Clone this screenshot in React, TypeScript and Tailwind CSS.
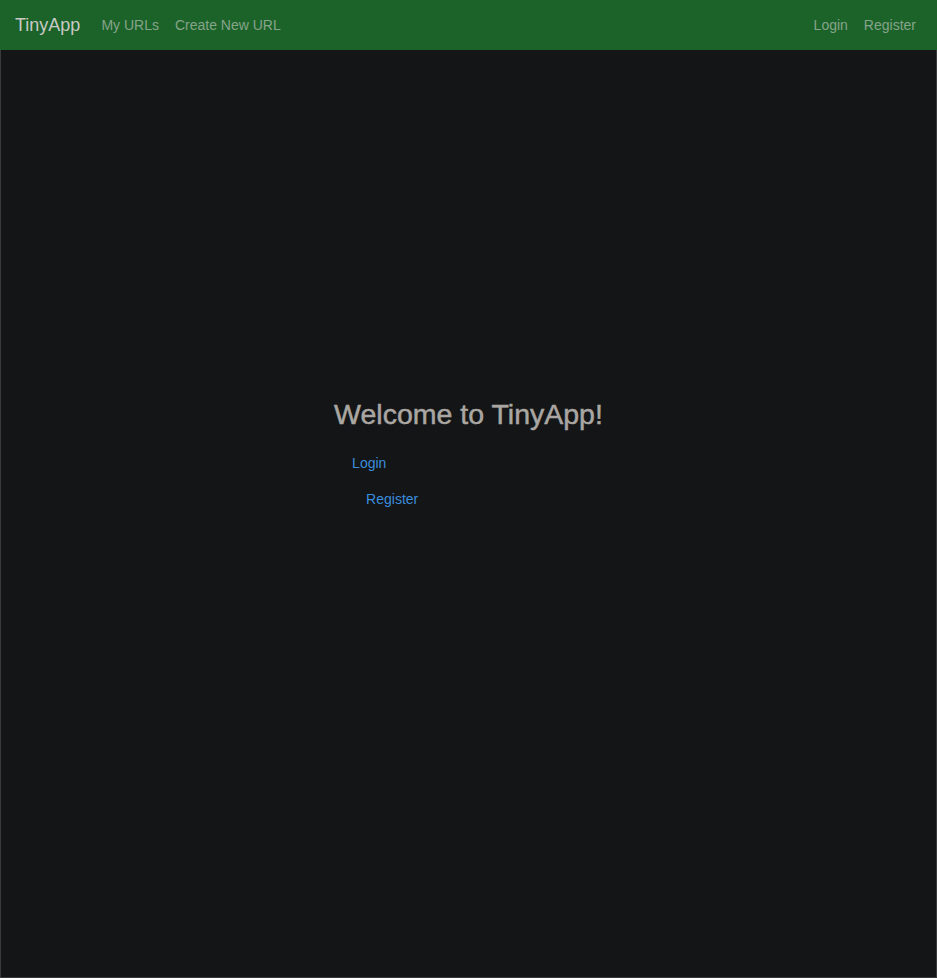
export default function App() {
  return (
    <div
      className="flex h-[978px] w-[937px] flex-col border border-t-0 border-[#3a3b3d] bg-[#141517]"
      style={{ fontFamily: '"Liberation Sans", Arial, sans-serif' }}
    >
      {/* Navbar */}
      <nav className="-mx-px flex h-[50px] shrink-0 items-center bg-[#1b6329] px-[15px]">
        <a className="mr-[21px] text-[18px] text-[#c9c9c6]">TinyApp</a>
        <div className="flex gap-[16px] text-[14px] text-[#86a48a]">
          <a>My URLs</a>
          <a>Create New URL</a>
        </div>
        <div className="ml-auto flex gap-[16px] pr-[6px] text-[14px] text-[#86a48a]">
          <a>Login</a>
          <a>Register</a>
        </div>
      </nav>

      {/* Main */}
      <main className="flex flex-1 justify-center pt-[347px]">
        <div className="flex flex-col">
          <h2 className="text-[28.5px] leading-[34px] text-[#aaa7a2] [-webkit-text-stroke:0.5px_#aaa7a2]">
            Welcome to TinyApp!
          </h2>
          <ul className="mt-[24px] flex flex-col gap-[19px] text-[14px] leading-[17px] text-[#3a8ddd]">
            <li className="pl-[18px]">
              <a>Login</a>
            </li>
            <li className="pl-[32px]">
              <a>Register</a>
            </li>
          </ul>
        </div>
      </main>
    </div>
  );
}
